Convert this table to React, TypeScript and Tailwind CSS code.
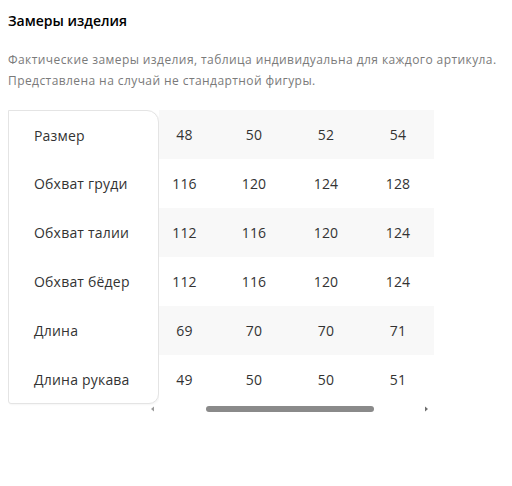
const rows = [
  { label: "Размер", values: ["48", "50", "52", "54"] },
  { label: "Обхват груди", values: ["116", "120", "124", "128"] },
  { label: "Обхват талии", values: ["112", "116", "120", "124"] },
  { label: "Обхват бёдер", values: ["112", "116", "120", "124"] },
  { label: "Длина", values: ["69", "70", "70", "71"] },
  { label: "Длина рукава", values: ["49", "50", "50", "51"] },
];

const App = () => {
  return (
    <div
      className="bg-white w-[512px] h-[486px] px-2 pt-[11px] text-[#333]"
      style={{ fontFamily: '"Open Sans", "Noto Sans", sans-serif' }}
    >
      <h2 className="text-[14px] font-semibold text-black leading-[20px]">
        Замеры изделия
      </h2>
      <p className="mt-[18px] text-[12px] leading-[21px] tracking-[0.42px] text-[#7a7a7a]">
        Фактические замеры изделия, таблица индивидуальна для каждого артикула.
        <br />
        Представлена на случай не стандартной фигуры.
      </p>

      <div className="mt-[19px] flex items-start">
        <div className="w-[151px] border border-[#e4e4e4] rounded-tr-[12px] rounded-br-[10px] rounded-bl-[3px] bg-white shadow-[1px_1px_2px_rgba(0,0,0,0.04)]">
          {rows.map((row, i) => (
            <div
              key={row.label}
              className={`flex items-center pl-[25px] text-[14px] tracking-[0.2px] ${
                i === 0 || i === rows.length - 1 ? "h-[48px]" : "h-[49px]"
              }`}
            >
              {row.label}
            </div>
          ))}
        </div>

        <div className="flex flex-col">
          <div className="w-[275px]">
            {rows.map((row, i) => (
              <div
                key={row.label}
                className={`flex h-[49px] items-center text-[14px] tracking-[0.2px] ${
                  i % 2 === 0 ? "bg-[#f8f8f8]" : "bg-white"
                }`}
              >
                <div className="w-[59px] pr-2 text-center">{row.values[0]}</div>
                <div className="w-[72px] text-center">{row.values[1]}</div>
                <div className="w-[72px] text-center">{row.values[2]}</div>
                <div className="w-[72px] text-center">{row.values[3]}</div>
              </div>
            ))}
          </div>
          <div className="-ml-[12px] w-[285px] h-[10px] flex items-center">
            <svg width="8" height="8" viewBox="0 0 8 8" className="ml-[2px]">
              <path d="M5 1.5 L2 4 L5 6.5 Z" fill="#9a9a9a" />
            </svg>
            <div className="ml-[49px] w-[168px] h-[6px] rounded-full bg-[#8a8a8a]" />
            <svg width="8" height="8" viewBox="0 0 8 8" className="ml-auto mr-[2px]">
              <path d="M3 1.5 L6 4 L3 6.5 Z" fill="#6f6f6f" />
            </svg>
          </div>
        </div>
      </div>
    </div>
  );
};

export default App;
